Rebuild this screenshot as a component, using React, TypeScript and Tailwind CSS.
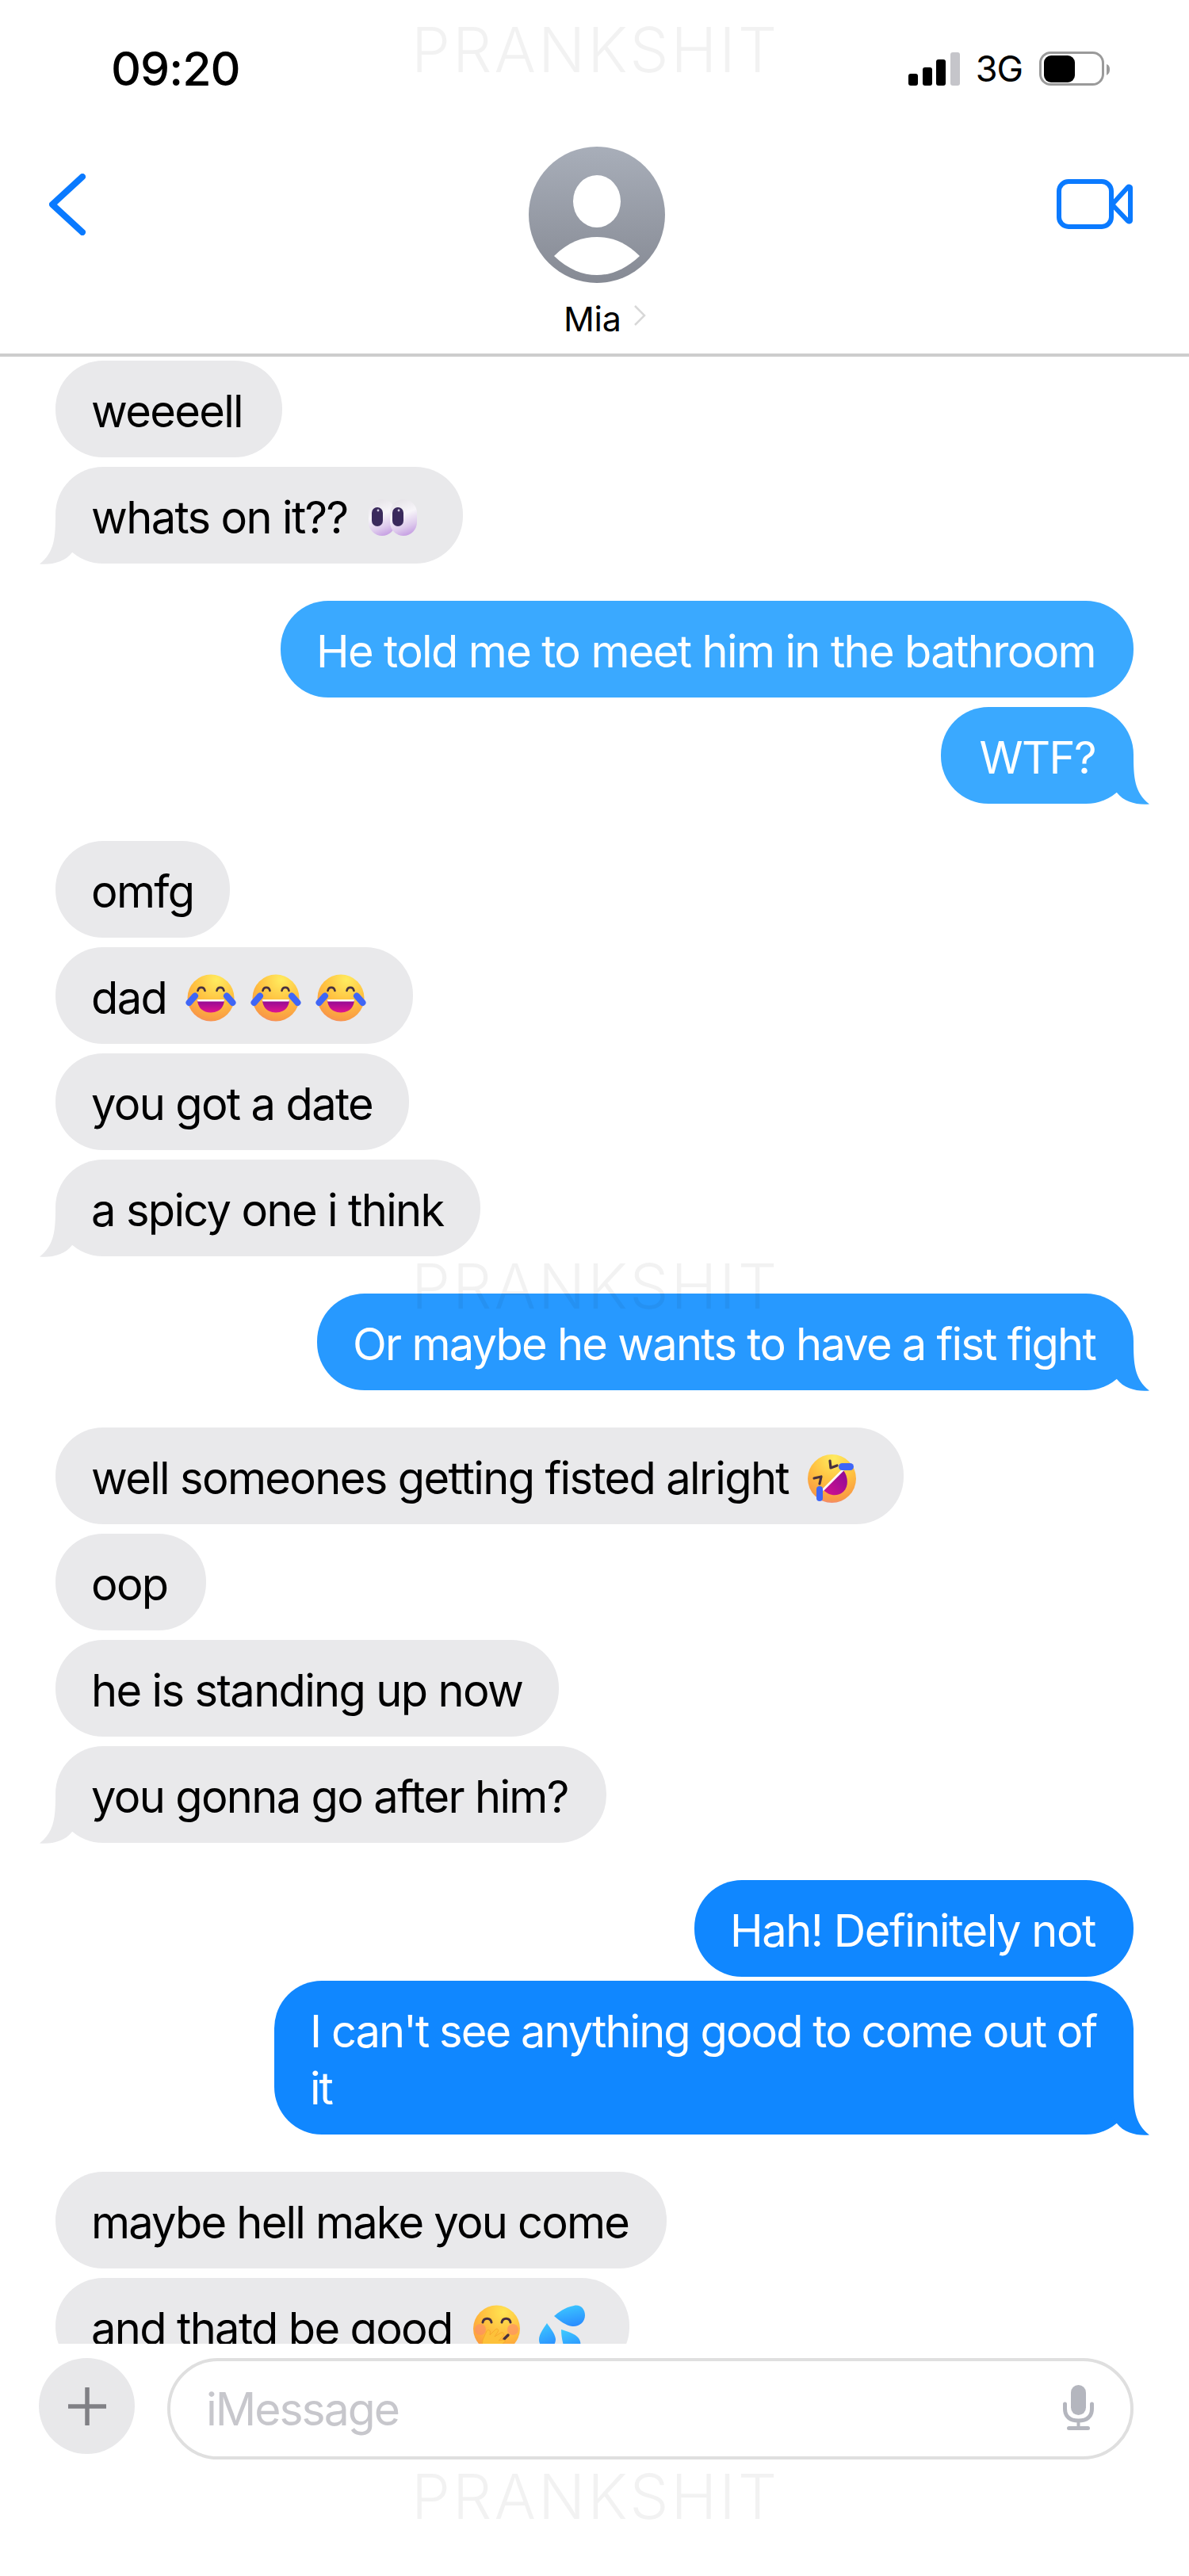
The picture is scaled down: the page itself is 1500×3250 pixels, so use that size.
import type { ReactNode } from "react";

const LEFT_TAIL = "M30 3 C30 30 31 50 50 64.5 C35 66 18 62 9 50 L0 40 L0 3 Z";

function Tail({ side, color }: { side: "left" | "right"; color: string }) {
  return side === "right" ? (
    <svg width="52" height="66" viewBox="0 0 52 66" className="absolute right-[-22px] bottom-[-2px]">
      <path d={LEFT_TAIL} fill={color} />
    </svg>
  ) : (
    <svg width="52" height="66" viewBox="0 0 52 66" className="absolute left-[-22px] bottom-[-2px]">
      <g transform="translate(52 0) scale(-1 1)">
        <path d={LEFT_TAIL} fill={color} />
      </g>
    </svg>
  );
}

function Recv({
  children,
  tail,
  pr = "pr-[48px]",
  track = "",
}: {
  children: ReactNode;
  tail?: boolean;
  pr?: string;
  track?: string;
}) {
  return (
    <div className={`relative self-start rounded-[60px] bg-[#e9e9eb] pl-[45px] ${pr} pt-[28px] pb-[22px] text-black ${track}`}>
      <div className="flex items-center whitespace-nowrap">{children}</div>
      {tail && <Tail side="left" color="#e9e9eb" />}
    </div>
  );
}

function Sent({
  children,
  tail,
  bg,
  color,
  w,
  track = "",
  pl = "pl-[45px]",
}: {
  children: ReactNode;
  tail?: boolean;
  bg: string;
  color: string;
  w?: string;
  track?: string;
  pl?: string;
}) {
  return (
    <div className={`relative self-end rounded-[60px] ${bg} ${pl} pr-[48px] pt-[28px] pb-[22px] text-white whitespace-nowrap ${track} ${w ?? ""}`}>
      {children}
      {tail && <Tail side="right" color={color} />}
    </div>
  );
}

function JoyEmoji({ className }: { className?: string }) {
  return (
    <svg width="64" height="60" viewBox="0 0 64 60" className={className}>
      <defs>
        <radialGradient id="joyFace" cx="0.62" cy="0.12" r="1">
          <stop offset="0" stopColor="#ffec5f" />
          <stop offset="0.5" stopColor="#ffbf3f" />
          <stop offset="0.85" stopColor="#f99a45" />
          <stop offset="1" stopColor="#ee7a9a" />
        </radialGradient>
        <linearGradient id="joyMouth" x1="0" y1="0" x2="0" y2="1">
          <stop offset="0" stopColor="#8a0a96" />
          <stop offset="1" stopColor="#e0148f" />
        </linearGradient>
      </defs>
      <circle cx="32" cy="30" r="29.5" fill="url(#joyFace)" />
      <path d="M15 32 H49 C49 42 42 48.5 32 48.5 C22 48.5 15 42 15 32 Z" fill="url(#joyMouth)" />
      <path d="M15 32 H49 L48.6 34.5 H15.4 Z" fill="#fff" />
      <path d="M15.5 21 C16.5 15.5 23.5 15.5 24.5 21" stroke="#47303f" strokeWidth="2.6" fill="none" strokeLinecap="round" />
      <path d="M39.5 21 C40.5 15.5 47.5 15.5 48.5 21" stroke="#47303f" strokeWidth="2.6" fill="none" strokeLinecap="round" />
      <path d="M4.5 36 L12 27.5" stroke="#3f66f6" strokeWidth="8" strokeLinecap="round" />
      <path d="M52 27.5 L59.5 36" stroke="#3f66f6" strokeWidth="8" strokeLinecap="round" />
    </svg>
  );
}

function EyesEmoji({ className }: { className?: string }) {
  return (
    <svg width="61" height="46" viewBox="0 0 61 46" className={className}>
      <defs>
        <linearGradient id="eyeWhite" x1="0.2" y1="0" x2="0.5" y2="1">
          <stop offset="0" stopColor="#e4e1e6" />
          <stop offset="0.45" stopColor="#f7f5f9" />
          <stop offset="0.8" stopColor="#ddc9ec" />
          <stop offset="1" stopColor="#c9a4e4" />
        </linearGradient>
      </defs>
      <rect x="0" y="0" width="34" height="46" rx="17" fill="url(#eyeWhite)" />
      <rect x="27" y="0" width="34" height="46" rx="17" fill="url(#eyeWhite)" />
      <rect x="4" y="10" width="14" height="24" rx="7" fill="#3a2a5c" />
      <rect x="30" y="10" width="14" height="24" rx="7" fill="#3a2a5c" />
      <circle cx="12" cy="14" r="1.4" fill="#cfc7df" />
      <circle cx="38" cy="14" r="1.4" fill="#cfc7df" />
    </svg>
  );
}

function RoflEmoji({ className }: { className?: string }) {
  return (
    <svg width="61" height="61" viewBox="0 0 61 61" className={className}>
      <defs>
        <radialGradient id="roflFace" cx="0.55" cy="0.08" r="1">
          <stop offset="0" stopColor="#ffec5f" />
          <stop offset="0.5" stopColor="#ffbf3f" />
          <stop offset="0.85" stopColor="#f99a45" />
          <stop offset="1" stopColor="#ee7a9a" />
        </radialGradient>
        <linearGradient id="roflMouth" x1="0" y1="1" x2="1" y2="0">
          <stop offset="0" stopColor="#d6128f" />
          <stop offset="1" stopColor="#8a0a96" />
        </linearGradient>
      </defs>
      <circle cx="30.5" cy="30.5" r="30.5" fill="url(#roflFace)" />
      <path d="M19 44 L45 20 C51 28 52 40 45 47 C37 54 26 52 19 44 Z" fill="url(#roflMouth)" />
      <path d="M19 45 L45 19" stroke="#fff" strokeWidth="2.6" />
      <path d="M28 8 L29 17 L37 14" stroke="#47303f" strokeWidth="3.2" fill="none" strokeLinecap="round" strokeLinejoin="round" />
      <path d="M8 30 L17 28 L15 37" stroke="#47303f" strokeWidth="3.2" fill="none" strokeLinecap="round" strokeLinejoin="round" />
      <rect x="39" y="11" width="19" height="9" rx="4.5" fill="#3f66f6" />
      <rect x="11" y="40" width="8" height="19" rx="4" fill="#3f66f6" />
    </svg>
  );
}

function HandEmoji({ className }: { className?: string }) {
  return (
    <svg width="59" height="60" viewBox="0 0 59 60" className={className}>
      <defs>
        <radialGradient id="handFace" cx="0.65" cy="0.15" r="1">
          <stop offset="0" stopColor="#ffe552" />
          <stop offset="0.55" stopColor="#ffb83c" />
          <stop offset="1" stopColor="#f98f3f" />
        </radialGradient>
      </defs>
      <circle cx="29.5" cy="30" r="29.5" fill="url(#handFace)" />
      <circle cx="9" cy="31" r="7" fill="#fb8a6a" opacity="0.6" />
      <circle cx="50" cy="31" r="7" fill="#fb8a6a" opacity="0.6" />
      <path d="M12 22 C13 15.5 22 15.5 23 22" stroke="#47303f" strokeWidth="3" fill="none" strokeLinecap="round" />
      <path d="M36 22 C37 15.5 46 15.5 47 22" stroke="#47303f" strokeWidth="3" fill="none" strokeLinecap="round" />
      <path d="M39 43 L44 38" stroke="#47303f" strokeWidth="3.4" strokeLinecap="round" />
      <path
        d="M10 60 L12 44 L17 33 C18 31 21 31 21.5 34 L21 38 L28 31 C30 29 33 31 31 34 L27 40 L35 35 C38 34 40 37 38 39 L32 45 L38 44 C41 44 41 47 38 48 L30 60 Z"
        fill="#fdc13a"
        stroke="#f4a62a"
        strokeWidth="0.8"
      />
    </svg>
  );
}

function DropsEmoji({ className }: { className?: string }) {
  return (
    <svg width="58" height="60" viewBox="0 0 58 60" className={className}>
      <defs>
        <linearGradient id="dropFill" x1="0.3" y1="0" x2="0.6" y2="1">
          <stop offset="0" stopColor="#3cc8ff" />
          <stop offset="1" stopColor="#2a8cff" />
        </linearGradient>
      </defs>
      <path d="M19 14 C24 10 32 3 44 1 C52 -1 58 5 58 13 C58 22 50 28 42 27 C34 26 26 20 19 14 Z" fill="url(#dropFill)" />
      <path d="M10 23 C13 28 20 35 21 43 C21 50 16 55 10.5 55 C4 55 0 50 0 44 C0 36 7 28 10 23 Z" fill="url(#dropFill)" />
      <path d="M28 31 C34 33 46 36 50 42 C55 49 52 58 44 60 L34 60 C30 50 28 40 28 31 Z" fill="url(#dropFill)" />
    </svg>
  );
}

function Watermark({ top }: { top: string }) {
  return (
    <div
      className={`pointer-events-none absolute left-[519px] ${top} text-[78px] leading-none font-light tracking-[3px] text-black/5 whitespace-nowrap`}
    >
      PRANKSHIT
    </div>
  );
}

export default function App() {
  return (
    <div
      className="relative h-[3250px] w-[1500px] overflow-hidden bg-white text-[56px] leading-[72px] tracking-[-1.65px]"
      style={{ fontFamily: "Inter, 'Liberation Sans', sans-serif" }}
    >
      <header className="h-[450px] border-b-4 border-[#cdcdcd]">
        <div className="flex h-[173px] items-center justify-between pl-[140px] pr-[100px]">
          <span className="text-[59px] leading-none font-medium tracking-[-1px] text-black">09:20</span>
          <div className="flex items-center">
            <svg width="65" height="42" viewBox="0 0 65 42">
              <rect x="0" y="27" width="12" height="15" rx="3" fill="#000" />
              <rect x="18" y="19" width="12" height="23" rx="3" fill="#000" />
              <rect x="35" y="9" width="12" height="33" rx="3" fill="#000" />
              <rect x="53" y="0" width="12" height="42" rx="3" fill="#c5c5ca" />
            </svg>
            <span className="ml-[20px] text-[45px] leading-none tracking-[-1px] text-black">3G</span>
            <svg width="89" height="43" viewBox="0 0 89 43" className="ml-[21px]">
              <rect x="1.5" y="1.5" width="79" height="40" rx="13" fill="none" stroke="#9a9a9a" strokeWidth="3" />
              <rect x="6" y="5" width="39" height="34" rx="9" fill="#000" />
              <path d="M85 16 C88 17 89 19 89 23 C89 26 88 28 85 30 Z" fill="#9a9a9a" />
            </svg>
          </div>
        </div>
        <div className="grid grid-cols-[667px_172px_1fr] pt-[12px]">
          <div className="pl-[62px] pt-[34px]">
            <svg width="46" height="78" viewBox="0 0 46 78">
              <path d="M42 4 L4 39 L42 74" fill="none" stroke="#0a7aff" strokeWidth="8" strokeLinecap="round" strokeLinejoin="round" />
            </svg>
          </div>
          <div>
            <svg width="172" height="172" viewBox="0 0 172 172">
              <defs>
                <linearGradient id="avatarBg" x1="0" y1="0" x2="0" y2="1">
                  <stop offset="0" stopColor="#a8aeb9" />
                  <stop offset="1" stopColor="#868a94" />
                </linearGradient>
              </defs>
              <circle cx="86" cy="86" r="86" fill="url(#avatarBg)" />
              <ellipse cx="86" cy="69" rx="30" ry="33" fill="#fff" />
              <path d="M32 138 C50 120 68 114 86 114 C104 114 122 120 140 138 C122 155 104 162 86 162 C68 162 50 155 32 138 Z" fill="#fff" />
            </svg>
            <div className="mt-[24px] flex items-center whitespace-nowrap pl-[44px]">
              <span className="text-[43px] leading-[42px] tracking-[-0.3px] text-black">Mia</span>
              <svg width="16" height="28" viewBox="0 0 16 28" className="ml-[15px] -mt-[8px]">
                <path d="M2 2 L14 14 L2 26" fill="none" stroke="#d8d8d8" strokeWidth="2.5" />
              </svg>
            </div>
          </div>
          <div className="flex justify-end pr-[71px] pt-[41px]">
            <svg width="96" height="63" viewBox="0 0 96 63">
              <rect x="3" y="3" width="66" height="57" rx="12" fill="none" stroke="#0a7aff" strokeWidth="6" />
              <path d="M70 32 L90 10 C91 9 93 9.5 93 11 L93 52 C93 53.5 91 54 90 53 Z" fill="none" stroke="#0a7aff" strokeWidth="6" strokeLinejoin="round" />
            </svg>
          </div>
        </div>
      </header>

      <main className="h-[2507px] overflow-hidden px-[70px] pt-[5px]">
        <div className="flex flex-col gap-[12px]">
          <Recv pr="pr-[50px]">weeeell</Recv>
          <Recv tail pr="pr-[58px]">
            whats on it??
            <EyesEmoji className="ml-[26px]" />
          </Recv>
        </div>
        <div className="mt-[47px] flex flex-col gap-[12px]">
          <Sent bg="bg-[#3aa9ff]" color="#3aa9ff">
            He told me to meet him in the bathroom
          </Sent>
          <Sent tail bg="bg-[#3aa9ff]" color="#3aa9ff" pl="pl-[49px]">
            WTF?
          </Sent>
        </div>
        <div className="mt-[47px] flex flex-col gap-[12px]">
          <Recv pr="pr-[46px]">omfg</Recv>
          <Recv pr="pr-[59px]">
            dad
            <JoyEmoji className="ml-[24px]" />
            <JoyEmoji className="ml-[18px]" />
            <JoyEmoji className="ml-[18px]" />
          </Recv>
          <Recv pr="pr-[46px]">you got a date</Recv>
          <Recv tail pr="pr-[46px]">a spicy one i think</Recv>
        </div>
        <div className="mt-[47px] flex flex-col">
          <Sent tail bg="bg-[#2799ff]" color="#2799ff" track="tracking-[-1.75px]">
            Or maybe he wants to have a fist fight
          </Sent>
        </div>
        <div className="mt-[47px] flex flex-col gap-[12px]">
          <Recv pr="pr-[60px]">
            well someones getting fisted alright
            <RoflEmoji className="ml-[24px]" />
          </Recv>
          <Recv>oop</Recv>
          <Recv pr="pr-[46px]">he is standing up now</Recv>
          <Recv tail>you gonna go after him?</Recv>
        </div>
        <div className="mt-[47px] flex flex-col gap-[5px]">
          <Sent bg="bg-[#1087ff]" color="#1087ff" track="tracking-[-1.45px]">
            Hah! Definitely not
          </Sent>
          <Sent tail bg="bg-[#1087ff]" color="#1087ff" w="w-[1084px]" track="tracking-[-1.95px]">
            I can't see anything good to come out of
            <br />
            it
          </Sent>
        </div>
        <div className="mt-[47px] flex flex-col gap-[12px]">
          <Recv track="tracking-[-1.8px]">maybe hell make you come</Recv>
          <Recv pr="pr-[56px]">
            and thatd be good
            <HandEmoji className="ml-[26px]" />
            <DropsEmoji className="ml-[24px]" />
          </Recv>
        </div>
      </main>

      <footer className="flex items-start pl-[49px] pt-[18px]">
        <div className="flex h-[121px] w-[121px] items-center justify-center rounded-full bg-[#e8e8ea]">
          <svg width="48" height="48" viewBox="0 0 48 48">
            <path d="M24 1 V47 M1 24 H47" stroke="#808085" strokeWidth="5.5" strokeLinecap="round" fill="none" />
          </svg>
        </div>
        <div className="ml-[41px] flex h-[128px] w-[1219px] items-center justify-between rounded-[64px] border-4 border-[#dfdfdf] pl-[45px] pr-[46px]">
          <span className="pt-[2px] text-[57px] leading-[72px] tracking-[-2px] text-[#c7c7cc]">iMessage</span>
          <svg width="39" height="57" viewBox="0 0 39 57" className="-mt-[4px]">
            <rect x="10" y="0" width="19" height="38" rx="9.5" fill="#b4b6be" />
            <path d="M2.5 24 V30 C2.5 40 9 45 19.5 45 C30 45 36.5 40 36.5 30 V24" fill="none" stroke="#b4b6be" strokeWidth="5" strokeLinecap="round" />
            <path d="M19.5 45 V54" stroke="#b4b6be" strokeWidth="4" />
            <rect x="5" y="52" width="29" height="5" rx="2.5" fill="#b4b6be" />
          </svg>
        </div>
      </footer>

      <Watermark top="top-[24px]" />
      <Watermark top="top-[1584px]" />
      <Watermark top="top-[3111px]" />
    </div>
  );
}
